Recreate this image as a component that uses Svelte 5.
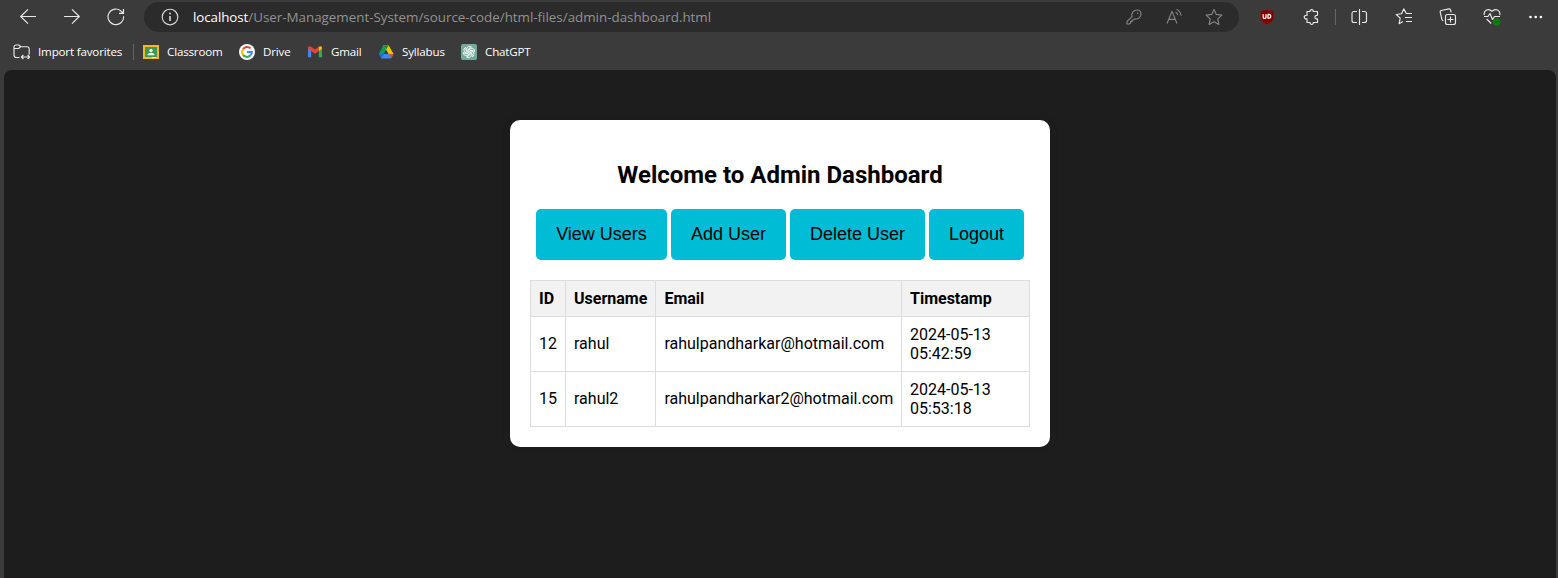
<script>
  const users = [
    { id: 12, name: 'rahul', email: 'rahulpandharkar@hotmail.com', time: '2024-05-13 05:42:59' },
    { id: 15, name: 'rahul2', email: 'rahulpandharkar2@hotmail.com', time: '2024-05-13 05:53:18' }
  ];
  const actions = [
    { label: 'View Users', width: 131 },
    { label: 'Add User', width: 115 },
    { label: 'Delete User', width: 135 },
    { label: 'Logout', width: 95 }
  ];
</script>

<div class="browser">
  <header class="toolbar">
    <nav class="nav">
      <svg width="16" height="16" viewBox="0 0 16 16"><path d="M16 7.5H.8M8 .4.7 7.5 8 14.6" /></svg>
      <svg width="16" height="16" viewBox="0 0 16 16"><path d="M0 7.5h15.2M8 .4l7.3 7.1L8 14.6" /></svg>
      <svg width="18" height="18" viewBox="0 0 18 18"><path d="M16.6 8.2a7.8 7.8 0 1 1-2.1-4.7l1.7 1.7M16.5 1v4.4H12" /></svg>
    </nav>
    <div class="address">
      <svg class="info" width="18" height="18" viewBox="0 0 18 18"><circle cx="9" cy="9" r="7.8" /><path d="M9 8v5" stroke-width="1.6" /><circle cx="9" cy="5.5" r="1" class="dot" /></svg>
      <span class="url"><b>localhost</b>/User-Management-System/source-code/html-files/admin-dashboard.html</span>
      <div class="address-icons">
        <svg width="18" height="18" viewBox="0 0 18 18"><path d="M7 8.6C5.8 4.5 9 2 12 2c2.5 0 4 1.8 4 4 0 3-2.5 5.6-6.2 4.9L8.5 12H7v1.6H5.5v1.5L4.4 16H2v-2.6z" /><circle cx="12.6" cy="5.3" r=".8" class="dot" /></svg>
        <svg width="18" height="18" viewBox="0 0 18 18"><path d="M2 15.5 7 3.4l5 12.1M3.7 11.3h6.6M10.6 4c1.2.7 1.9 1.8 2.1 3.2M11.6 1.2c2.5 1.2 4.1 3.5 4.5 6.6" /></svg>
        <svg width="18" height="18" viewBox="0 0 18 18"><path d="m9 1.4 2.3 5 5.6.7-4.1 3.8 1.1 5.5L9 13.7l-4.9 2.7 1.1-5.5-4.1-3.8 5.6-.7z" /></svg>
      </div>
    </div>
    <div class="tools">
      <svg class="shield" width="16" height="18" viewBox="0 0 16 18"><path d="M8 1c2 1.5 4.2 2 6.7 2v6.5c0 3-2.7 5.3-6.7 7.2-4-1.9-6.7-4.2-6.7-7.2V3C3.8 3 6 2.5 8 1z" fill="#800000" stroke="#693030" stroke-width=".5" /><path d="M4.2 6.3v3.1c0 1.3 2.8 1.3 2.8 0V6.3M9 6.5v3.7h1.2c2.1 0 2.1-3.7 0-3.7z" stroke="#fff" stroke-width="1.3" /></svg>
      <svg class="puzzle" width="18" height="18" viewBox="0 0 18 18"><path d="M4 3.5h3.1c-.4-2.6 3.6-2.6 3.2 0h4.2v3.8c-3.4-.4-3.4 4.2 0 3.6v3.6h-4.2c.4 2.6-3.6 2.6-3.2 0H4v-3.6c-3.7.5-3.7-4.1 0-3.6z" /></svg>
      <i class="divider"></i>
      <svg class="split" width="18" height="18" viewBox="0 0 18 18"><path d="M9.5 1v16M7 3.5H4a2 2 0 0 0-2 2v7a2 2 0 0 0 2 2h3m5-11h2.5a2 2 0 0 1 2 2v7a2 2 0 0 1-2 2H12" /></svg>
      <svg class="favorites" width="18" height="18" viewBox="0 0 18 18"><path d="M11.2 5.2 8.8.9 6.5 5.8l-5.3.7 4 3.6-1.1 5.6 3.8-2.1M11 5.5h6M10 9.5h7M11 13.5h6" /></svg>
      <svg class="collections" width="18" height="18" viewBox="0 0 18 18"><rect x="6.5" y="6.5" width="10" height="10" rx="2" /><path d="M11.5 8.5v6M8.5 11.5h6M4.5 12.8c-1-.1-1.4-.8-1.6-1.5L1.2 4.2c-.2-.8.2-1.5 1.1-1.7l7.5-1.6c.9-.2 1.5.2 1.8 1.1l.6 2.3" /></svg>
      <svg class="heart" width="18" height="18" viewBox="0 0 18 18"><path d="M1.3 7C.2 2.3 5.7-.2 9 3.3 12.4-.2 17.8 2.3 16.7 7M1 8.5h4l2-3 2.5 6 2-3H17M3.7 11l4.5 4.5" /><circle cx="13.7" cy="14" r="3.8" fill="#107c10" stroke="none" /><path d="m12.4 14.2.9.9 2-2.2" stroke="#0a570c" stroke-width=".8" /></svg>
      <svg class="more" width="18" height="18" viewBox="0 0 18 18"><g class="dot"><circle cx="3.5" cy="9" r="1.3" /><circle cx="8.7" cy="9" r="1.3" /><circle cx="13.9" cy="9" r="1.3" /></g></svg>
    </div>
  </header>

  <nav class="bookmarks">
    <div class="item import">
      <svg width="17" height="16" viewBox="0 0 17 16"><path d="M6.5 13.5h-3a2.5 2.5 0 0 1-2.5-2.5V3a2 2 0 0 1 2-2h2.8l2 1.7H14A2.2 2.2 0 0 1 16.2 5v5.5M1 4.5h4.5l2.2-1.8M8.4 13h8.2M10.4 11l-2 2 2 2m4.2-4 2 2-2 2" /></svg>
      <span>Import favorites</span>
    </div>
    <i class="divider"></i>
    <div class="item classroom">
      <svg width="16" height="16" viewBox="0 0 16 16"><path d="M0 1h16v14H0z" fill="#f6b91b" stroke="none" /><path d="M2 3h12v10H2z" fill="#3a9a5b" stroke="none" /><circle cx="8" cy="6.3" r="1.6" fill="#fff" stroke="none" /><path d="M4.3 11.2c0-3.4 7.4-3.4 7.4 0z" fill="#eaf7ee" stroke="none" /><path d="M9 13h4v.8H9z" fill="#fff3c4" stroke="none" /></svg>
      <span>Classroom</span>
    </div>
    <div class="item drive">
      <svg width="16" height="16" viewBox="0 0 16 16"><circle cx="8" cy="8" r="8" fill="#fff" stroke="none" /><g stroke-width="2"><path d="M4 5.2a4.9 4.9 0 0 1 7.6-.8" stroke="#ea4335" /><path d="M4 10.8a5 5 0 0 1 0-5.6" stroke="#fbbc05" /><path d="M11.3 11.6A4.9 4.9 0 0 1 4 10.8" stroke="#34a853" /><path d="M8 8h4.9a5 5 0 0 1-1.6 3.6" stroke="#4285f4" /></g></svg>
      <span>Drive</span>
    </div>
    <div class="item gmail">
      <svg width="16" height="16" viewBox="0 0 16 16"><g stroke="none"><path d="M1 4v9.2h3.2V6.4z" fill="#4285f4" /><path d="M15 4v9.2h-3.2V6.4z" fill="#34a853" /><path d="M1 3.7C1 2 3 1.7 4.2 2.7L8 5.5l3.8-2.8v4.2L8 9.8 4.2 7 1 4.7z" fill="#ea4335" /><path d="M11.8 2.7c1.4-1 3.2-.6 3.2 1v1L11.8 7z" fill="#fbbc04" /></g></svg>
      <span>Gmail</span>
    </div>
    <div class="item syllabus">
      <svg width="16" height="16" viewBox="0 0 16 16"><g stroke="none"><path d="M5.3 1.2H8L10.2 5 4 14.6.8 10z" fill="#0f9d58" /><path d="M5.3 1.2h5.3l5 8.8h-5.3z" fill="#fbbc04" /><path d="M5.3 1.2h5.3L8 5.8z" fill="#168544" /><path d="M3.4 10h12.2L13 14.6H3z" fill="#4285f4" /><path d="M11.5 10h4.1L13 14.6z" fill="#ea4335" /><path d="m.8 10 2.5 4.5L6 10z" fill="#2469ce" /><path d="m8 5.8 2.5 4.2h-5z" fill="#3b3b3b" /></g></svg>
      <span>Syllabus</span>
    </div>
    <div class="item chatgpt">
      <svg width="16" height="16" viewBox="0 0 16 16"><rect width="16" height="16" rx="2" fill="#74aa9c" stroke="none" /><g stroke="#fff" stroke-width=".85">{#each [0, 60, 120, 180, 240, 300] as angle}<path transform={`rotate(${angle} 8 8)`} d="M6 8V4.4A2.7 2.7 0 0 1 10.5 3L7.9 4.5v3.1" />{/each}</g></svg>
      <span>ChatGPT</span>
    </div>
  </nav>

  <main>
    <section class="card">
      <h2>Welcome to Admin Dashboard</h2>
      <div class="actions">
        {#each actions as action}
          <button style:width={`${action.width}px`}>{action.label}</button>
        {/each}
      </div>
      <table>
        <colgroup><col class="id" /><col class="name" /><col class="email" /><col class="time" /></colgroup>
        <thead><tr><th>ID</th><th>Username</th><th>Email</th><th>Timestamp</th></tr></thead>
        <tbody>
          {#each users as user}
            <tr><td>{user.id}</td><td>{user.name}</td><td>{user.email}</td><td>{user.time}</td></tr>
          {/each}
        </tbody>
      </table>
    </section>
  </main>
</div>

<style>
  :global(body) { margin: 0; background: #3b3b3b; overflow: hidden; }
  * { box-sizing: border-box; }
  .browser { height: 578px; display: flex; flex-direction: column; background: #3b3b3b; }
  svg { display: block; flex: none; fill: none; stroke: #e8e8e8; stroke-width: 1.15; stroke-linejoin: round; }
  .dot { fill: currentColor; stroke: none; }
  .toolbar { height: 34px; display: flex; align-items: center; font-family: "Open Sans", sans-serif; color: #fff; }
  .nav { width: 144px; padding-left: 20px; display: flex; align-items: center; gap: 28px; }
  .nav svg:nth-child(2) { margin-right: -1px; }
  .address { width: 1095px; height: 30px; padding: 0 16px 0 17px; display: flex; align-items: center; border-radius: 15px; background: #2b2b2b; }
  .info { color: #d6d6d6; stroke: #d6d6d6; }
  .url { margin-left: 14px; font-size: 13.36px; line-height: 20px; white-space: nowrap; color: #929292; }
  .url b { font-weight: 400; letter-spacing: -.08px; color: #fff; }
  .address-icons { margin-left: auto; display: flex; gap: 22px; color: #858585; }
  .address-icons svg { stroke: #858585; }
  .tools { flex: 1; display: flex; align-items: center; padding-left: 20px; }
  .puzzle { margin-left: 28px; }
  .divider { width: 1px; height: 16px; background: #656565; }
  .tools .divider { margin: 0 14px; }
  .favorites { margin-left: 27px; }
  .collections { margin-left: 26px; }
  .heart { margin-left: 26px; }
  .more { margin-left: 26px; }
  .bookmarks { height: 36px; padding-left: 13px; display: flex; align-items: center; font: 11.6px/18px "Open Sans", sans-serif; letter-spacing: -.17px; color: #fff; }
  .item { display: flex; align-items: center; gap: 8px; white-space: nowrap; }
  .import { width: 120px; }
  .bookmarks .divider { margin-right: 9px; }
  .classroom { width: 96px; }
  .drive { width: 68px; }
  .gmail { width: 71px; }
  .syllabus { width: 83px; }
  main { flex: 1; margin: 0 2px 0 4px; padding-top: 50px; background: #1d1d1d; border-radius: 8px 8px 0 0; border-bottom: 1px solid #20171b; }
  .card { width: 540px; height: 327px; margin-left: 506px; padding: 20px; border-radius: 10px; background: #fff; box-shadow: 0 0 10px rgba(0, 0, 0, .1); font: 16px/19px Roboto, sans-serif; color: #000; }
  h2 { margin: 21px 0 19px; font-size: 24px; line-height: 29px; font-weight: 700; text-align: center; }
  .actions { display: flex; justify-content: center; gap: 4px; margin-bottom: 20px; }
  button { height: 51px; padding: 0; border: 0; border-radius: 5px; background: #00bcd4; color: #000; font: 18px/21px "Liberation Sans", sans-serif; }
  table { width: 500px; table-layout: fixed; border-collapse: collapse; }
  .id { width: 35px; }
  .name { width: 90px; }
  .email { width: 246px; }
  .time { width: 128px; }
  th, td { padding: 8px; border: 1px solid #ddd; text-align: left; }
  th { background: #f2f2f2; }
  td:not(:last-child) { padding-top: 7px; padding-bottom: 9px; }
  th:nth-child(3), td:nth-child(3) { padding-left: 8.4px; padding-right: 7px; }
  td:last-child { padding-right: 35px; }
</style>
